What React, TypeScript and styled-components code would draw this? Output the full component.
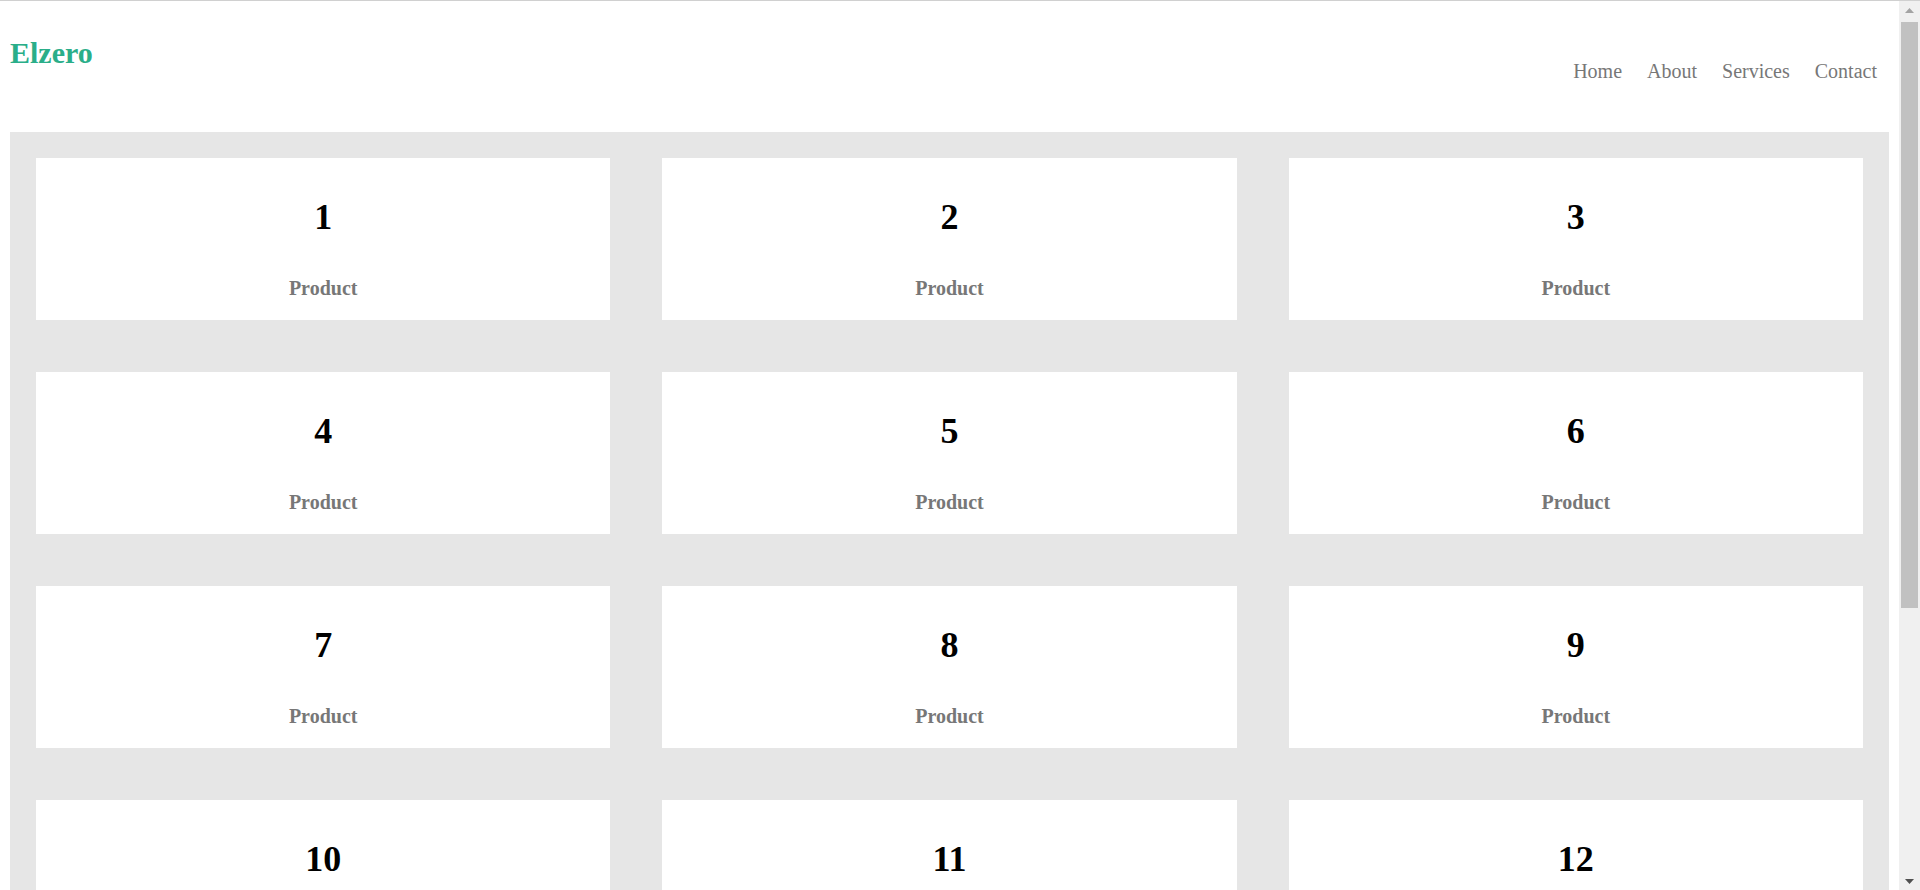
import React from "react";
import styled, { createGlobalStyle } from "styled-components";

const GlobalStyle = createGlobalStyle`
  html, body {
    margin: 0;
    height: 100%;
    overflow: hidden;
    background: #ffffff;
  }
  body {
    font-family: "Liberation Serif", "Times New Roman", serif;
  }
`;

const Window = styled.div`
  display: flex;
  height: 100vh;
  box-sizing: border-box;
  border-top: 1px solid #d0d0d0;
`;

const Viewport = styled.main`
  flex: 1;
  min-width: 0;
  overflow-y: auto;
  scrollbar-width: none;
  &::-webkit-scrollbar {
    display: none;
  }
`;

const ScrollBar = styled.div`
  display: flex;
  flex-direction: column;
  width: 21px;
  flex: 0 0 21px;
  background: #f0f0f0;
`;

const ArrowButton = styled.div<{ $down?: boolean }>`
  display: flex;
  justify-content: center;
  align-items: ${(p) => (p.$down ? "flex-start" : "flex-end")};
  height: 17px;
  padding: ${(p) => (p.$down ? "6px 0 0" : "0 0 5px")};
  box-sizing: border-box;
`;

const Track = styled.div`
  flex: 1;
  padding: 4px 2px 0;
`;

const Thumb = styled.div`
  height: 586px;
  background: #c1c1c1;
`;

const Page = styled.div`
  padding: 0 10px 88px;
`;

const Header = styled.header`
  display: flex;
  justify-content: space-between;
  align-items: flex-start;
  height: 131px;
`;

const Logo = styled.a`
  margin-top: 35px;
  font-size: 30px;
  line-height: 34px;
  font-weight: bold;
  color: #2aae89;
  text-decoration: none;
`;

const Nav = styled.nav`
  display: flex;
  gap: 25px;
  margin-top: 59px;
  padding-right: 12px;
`;

const NavLink = styled.a`
  font-size: 20px;
  line-height: 23px;
  color: #777777;
  text-decoration: none;
`;

const Products = styled.section`
  display: grid;
  grid-template-columns: repeat(3, 1fr);
  gap: 52px;
  padding: 26px;
  background: #e6e6e6;
`;

const Card = styled.div`
  display: flex;
  flex-direction: column;
  align-items: center;
  height: 162px;
  box-sizing: border-box;
  padding: 39px 0 21px;
  background: #ffffff;
`;

const Number = styled.h2`
  margin: 0 0 39px;
  font-size: 36px;
  line-height: 41px;
  font-weight: bold;
  color: #000000;
`;

const Label = styled.p`
  margin: 0;
  font-size: 20px;
  line-height: 23px;
  font-weight: bold;
  color: #777777;
`;

const links = ["Home", "About", "Services", "Contact"];
const products = Array.from({ length: 15 }, (_, i) => i + 1);

export default function App() {
  return (
    <>
      <GlobalStyle />
      <Window>
        <Viewport>
          <Page>
            <Header>
              <Logo href="#">Elzero</Logo>
              <Nav>
                {links.map((l) => (
                  <NavLink key={l} href="#">
                    {l}
                  </NavLink>
                ))}
              </Nav>
            </Header>
            <Products>
              {products.map((n) => (
                <Card key={n}>
                  <Number>{n}</Number>
                  <Label>Product</Label>
                </Card>
              ))}
            </Products>
          </Page>
        </Viewport>
        <ScrollBar>
          <ArrowButton>
            <svg width="9" height="5" viewBox="0 0 9 5">
              <polygon points="0,5 4.5,0 9,5" fill="#a3a3a3" />
            </svg>
          </ArrowButton>
          <Track>
            <Thumb />
          </Track>
          <ArrowButton $down>
            <svg width="9" height="5" viewBox="0 0 9 5">
              <polygon points="0,0 9,0 4.5,5" fill="#505050" />
            </svg>
          </ArrowButton>
        </ScrollBar>
      </Window>
    </>
  );
}
